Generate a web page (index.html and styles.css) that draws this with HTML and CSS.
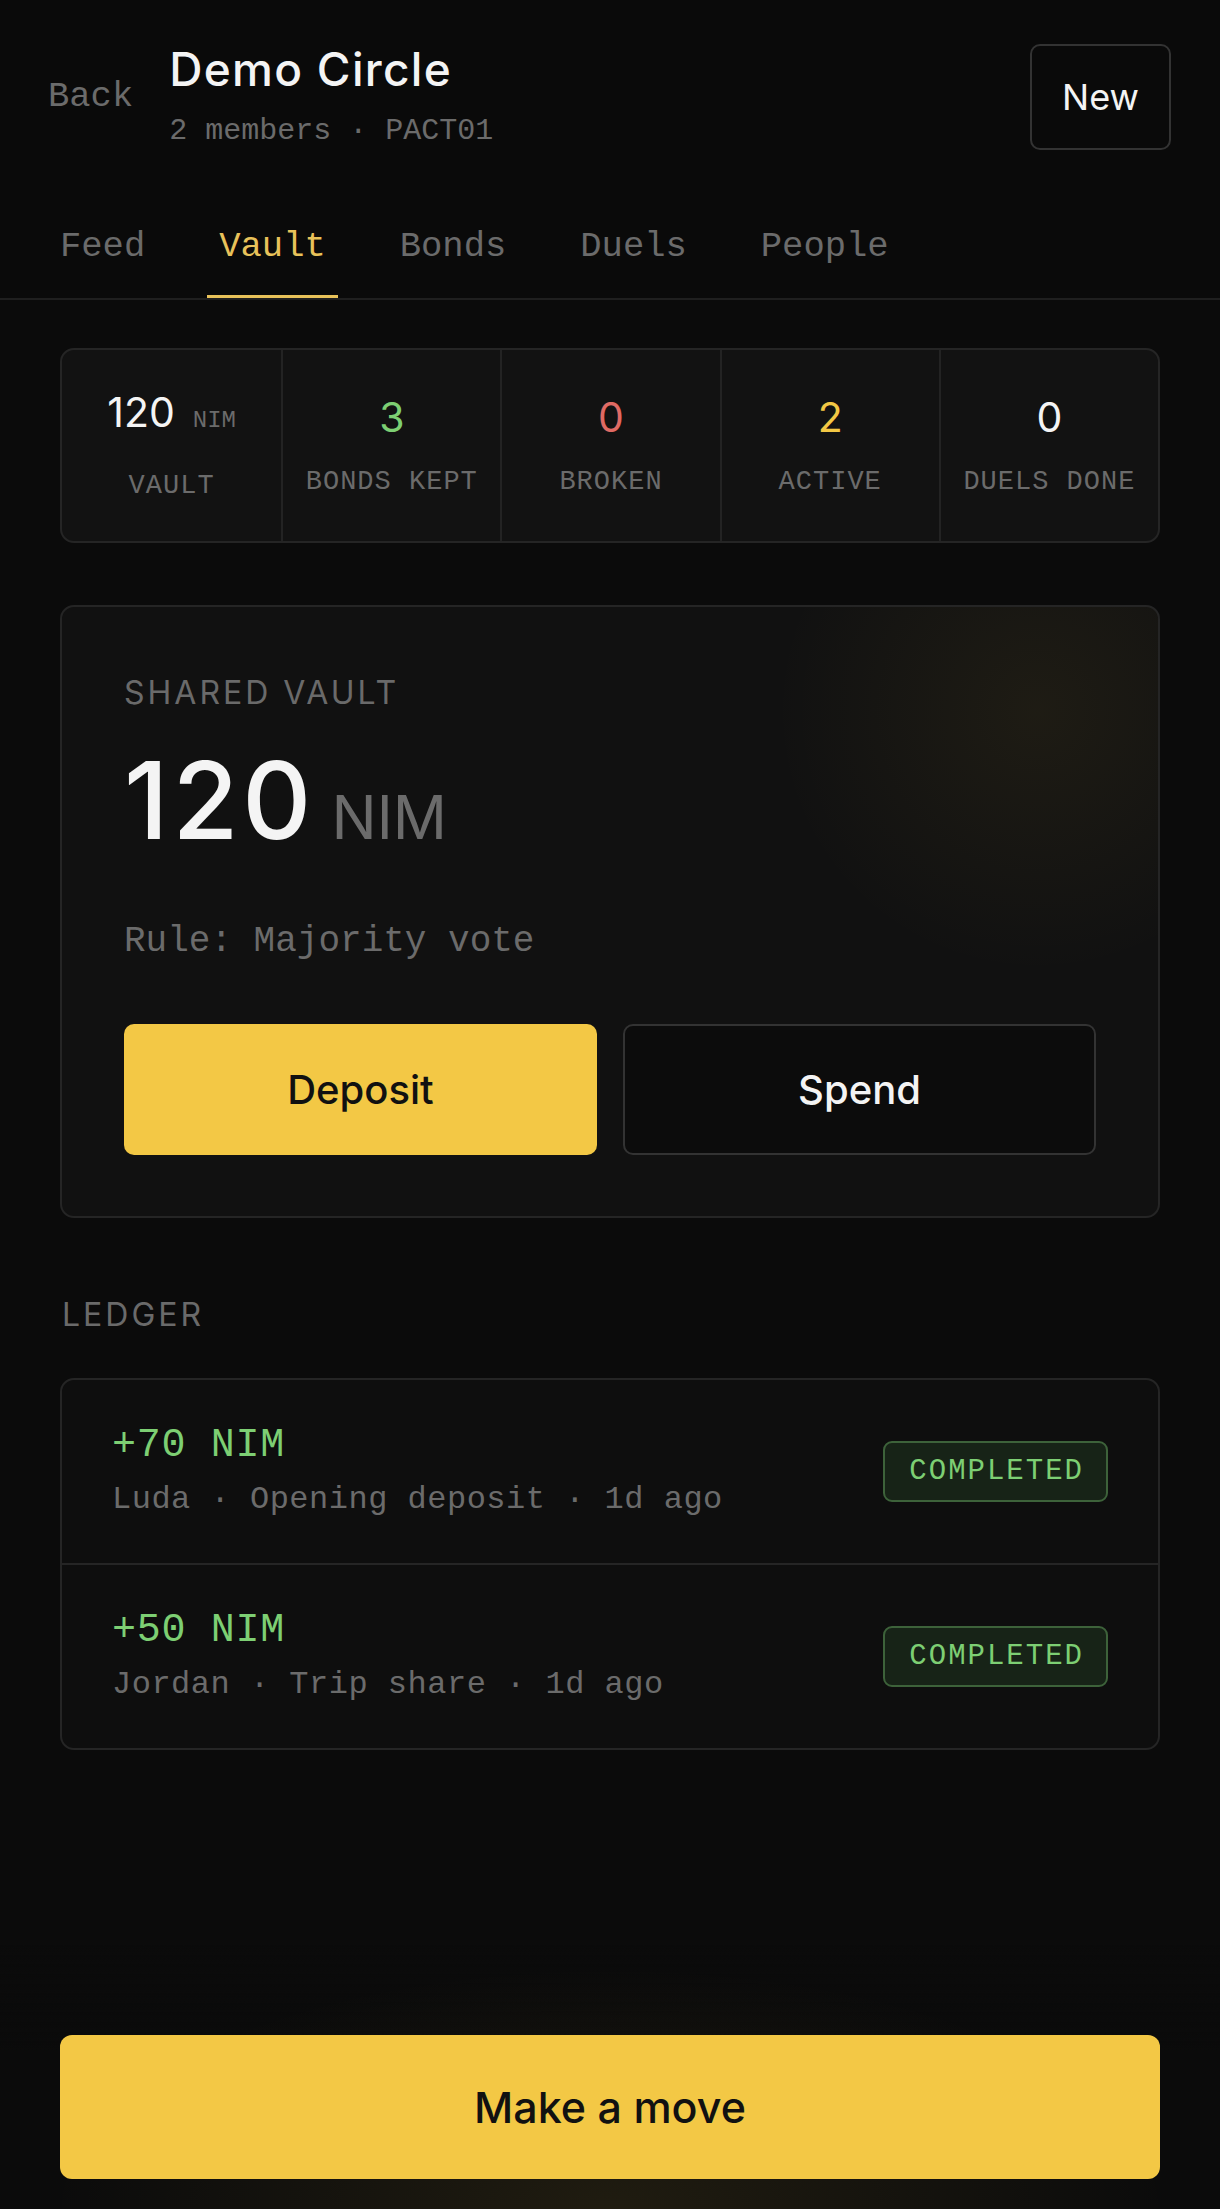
FILE: index.html
```html
<!DOCTYPE html>
<html lang="en">
<head>
    <meta charset="UTF-8">
    <meta name="viewport" content="width=device-width, initial-scale=1.0">
    <title>Demo Circle - Vault</title>
    <link rel="stylesheet" href="styles.css">
</head>
<body>
    <header class="header">
        <div class="topbar">
            <a class="back" href="#">Back</a>
            <div class="circle-info">
                <h1>Demo Circle</h1>
                <div class="circle-meta">2 members · PACT01</div>
            </div>
            <button class="btn-new">New</button>
        </div>
        <nav class="tabs">
            <a class="tab" href="#">Feed</a>
            <a class="tab active" href="#">Vault</a>
            <a class="tab" href="#">Bonds</a>
            <a class="tab" href="#">Duels</a>
            <a class="tab" href="#">People</a>
        </nav>
    </header>

    <main class="content">
        <!-- resumo do circulo -->
        <section class="stats">
            <div class="stat">
                <div class="stat-value">120<span class="stat-unit">NIM</span></div>
                <div class="stat-label">VAULT</div>
            </div>
            <div class="stat">
                <div class="stat-value green">3</div>
                <div class="stat-label">BONDS KEPT</div>
            </div>
            <div class="stat">
                <div class="stat-value red">0</div>
                <div class="stat-label">BROKEN</div>
            </div>
            <div class="stat">
                <div class="stat-value yellow">2</div>
                <div class="stat-label">ACTIVE</div>
            </div>
            <div class="stat">
                <div class="stat-value">0</div>
                <div class="stat-label">DUELS DONE</div>
            </div>
        </section>

        <section class="vault-card">
            <div class="section-label">SHARED VAULT</div>
            <div class="vault-amount">120<span class="vault-unit">NIM</span></div>
            <div class="vault-rule">Rule: Majority vote</div>
            <div class="vault-actions">
                <button class="btn btn-primary">Deposit</button>
                <button class="btn btn-outline">Spend</button>
            </div>
        </section>

        <div class="section-label ledger-title">LEDGER</div>
        <section class="ledger">
            <div class="ledger-item">
                <div>
                    <div class="ledger-amount">+70 NIM</div>
                    <div class="ledger-meta">Luda · Opening deposit · 1d ago</div>
                </div>
                <span class="badge">COMPLETED</span>
            </div>
            <div class="ledger-item">
                <div>
                    <div class="ledger-amount">+50 NIM</div>
                    <div class="ledger-meta">Jordan · Trip share · 1d ago</div>
                </div>
                <span class="badge">COMPLETED</span>
            </div>
        </section>
    </main>

    <footer class="action-bar">
        <button class="btn-move">Make a move</button>
    </footer>
</body>
</html>
```

FILE: styles.css
```css
* {
    box-sizing: border-box;
}
body {
    margin: 0;
    background-color: #0b0b0b;
    color: #f4f4f4;
    font-family: Inter, "Noto Sans", sans-serif;
    min-height: 2209px;
}
button {
    font-family: inherit;
    cursor: pointer;
}
.header {
    background-color: #0a0a0a;
    border-bottom: 2px solid #1f1f1f;
}
.topbar {
    display: flex;
    align-items: center;
    padding: 42px 49px 0 48px;
}
.back {
    font-family: "Liberation Mono", monospace;
    font-size: 35.5px;
    color: #6b6b6b;
    text-decoration: none;
    margin-right: 36px;
}
.circle-info {
    flex: 1;
}
.circle-info h1 {
    margin: 0;
    font-size: 46px;
    line-height: 55px;
    font-weight: 500;
    letter-spacing: 1.3px;
    color: #f4f4f4;
}
.circle-meta {
    margin-top: 15px;
    font-family: "Liberation Mono", monospace;
    font-size: 30px;
    line-height: 39px;
    color: #6b6b6b;
}
.btn-new {
    width: 141px;
    height: 106px;
    background: #0a0a0a;
    border: 2px solid #333;
    border-radius: 10px;
    color: #f4f4f4;
    font-size: 36px;
}
.tabs {
    display: flex;
    gap: 50px;
    padding: 0 48px;
    margin-top: 75px;
}
.tab {
    padding: 0 12px 27px;
    font-family: "Liberation Mono", monospace;
    font-size: 35.5px;
    line-height: 42px;
    color: #6b6b6b;
    text-decoration: none;
    border-bottom: 3px solid transparent;
}
.tab.active {
    color: #e8c25a;
    border-bottom-color: #e8c25a;
}

.content {
    padding: 48px 60px 0;
}
.stats {
    display: grid;
    grid-template-columns: repeat(5, 1fr);
    background: #121212;
    border: 2px solid #252525;
    border-radius: 14px;
}
.stat {
    display: flex;
    flex-direction: column;
    align-items: center;
    justify-content: center;
    gap: 24px;
    height: 191px;
}
.stat + .stat {
    border-left: 2px solid #232323;
}
.stat-value {
    font-size: 41px;
    line-height: 48px;
    color: #f4f4f4;
}
.stat-unit {
    margin-left: 18px;
    font-family: "Liberation Mono", monospace;
    font-size: 24px;
    color: #6b6b6b;
}
.stat-label {
    font-family: "Liberation Mono", monospace;
    font-size: 27px;
    line-height: 34px;
    letter-spacing: 1px;
    color: #6b6b6b;
}
.green { color: #7dcf73; }
.red { color: #e06a64; }
.yellow { color: #f2c744; }

.vault-card {
    margin-top: 62px;
    padding: 67px 62px 61px;
    background:
        radial-gradient(circle at 89% 17%, rgba(242, 199, 68, 0.06), rgba(242, 199, 68, 0) 24%),
        #111;
    border: 2px solid #252525;
    border-radius: 14px;
}
.section-label {
    font-size: 32px;
    line-height: 38px;
    letter-spacing: 3px;
    color: #6a6a6a;
}
.vault-amount {
    margin-top: 35px;
    font-size: 107px;
    line-height: 107px;
    font-weight: 500;
    letter-spacing: 4px;
    color: #f4f4f4;
}
.vault-unit {
    margin-left: 16px;
    font-size: 60px;
    font-weight: 400;
    letter-spacing: 0;
    color: #6b6b6b;
}
.vault-rule {
    margin-top: 49px;
    font-family: "Liberation Mono", monospace;
    font-size: 36px;
    line-height: 44px;
    color: #6b6b6b;
}
.vault-actions {
    display: grid;
    grid-template-columns: 1fr 1fr;
    gap: 26px;
    margin-top: 60px;
}
.btn {
    height: 131px;
    border-radius: 10px;
    font-size: 40px;
    font-weight: 500;
}
.btn-primary {
    background: #f3c845;
    border: none;
    color: #111;
}
.btn-outline {
    background: #0c0c0c;
    border: 2px solid #333;
    color: #f4f4f4;
}

.ledger-title {
    margin-top: 78px;
    padding-left: 2px;
}
.ledger {
    margin-top: 44px;
    background: #0e0e0e;
    border: 2px solid #252525;
    border-radius: 14px;
}
.ledger-item {
    display: flex;
    align-items: center;
    justify-content: space-between;
    padding: 42px 50px 43px;
}
.ledger-item + .ledger-item {
    border-top: 2px solid #252525;
}
.ledger-amount {
    font-family: "Liberation Mono", monospace;
    font-size: 40px;
    line-height: 48px;
    letter-spacing: 0.7px;
    color: #7dcf73;
}
.ledger-meta {
    margin-top: 10px;
    font-family: "Liberation Mono", monospace;
    font-size: 32px;
    line-height: 40px;
    letter-spacing: 0.5px;
    color: #6b6b6b;
}
.badge {
    height: 61px;
    padding: 0 22px 0 24px;
    font-family: "Liberation Mono", monospace;
    font-size: 29px;
    line-height: 57px;
    letter-spacing: 2px;
    color: #7dcf73;
    background: #172317;
    border: 2px solid #3d623a;
    border-radius: 9px;
}

.action-bar {
    position: fixed;
    left: 0;
    right: 0;
    bottom: 0;
    padding: 90px 60px 30px;
    background:
        radial-gradient(ellipse at 50% 100%, rgba(242, 199, 68, 0.09), rgba(242, 199, 68, 0) 65%),
        linear-gradient(to bottom, rgba(11, 11, 11, 0), #0b0b0b 40%);
}
.btn-move {
    width: 100%;
    height: 144px;
    background: #f3c845;
    border: none;
    border-radius: 12px;
    color: #111;
    font-size: 43px;
    font-weight: 500;
}
```
